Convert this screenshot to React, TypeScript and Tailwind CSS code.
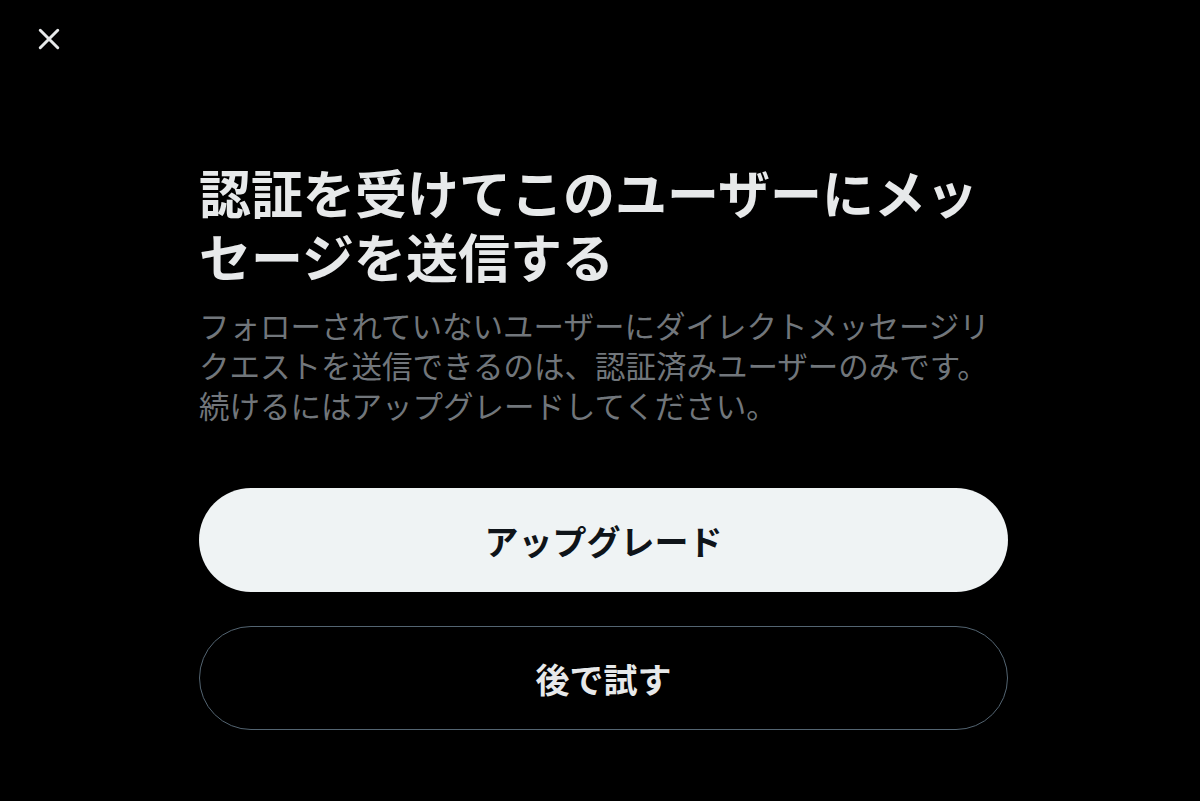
import React from 'react';

const font = { fontFamily: '"Noto Sans CJK JP", "Noto Sans", sans-serif' };

const CloseIcon: React.FC = () => (
  <svg width="30" height="30" viewBox="0 0 24 24" fill="none" stroke="#e7e9ea" strokeWidth="2.4" strokeLinecap="round">
    <path d="M5 5 L19 19 M19 5 L5 19" />
  </svg>
);

const App: React.FC = () => {
  return (
    <div className="w-[1200px] h-[801px] bg-black overflow-hidden" style={font}>
      <div className="pt-[24px] pl-[34px]">
        <button className="w-[30px] h-[30px] flex items-center justify-center">
          <CloseIcon />
        </button>
      </div>
      <div className="ml-[199px] w-[809px] mt-[106px]">
        <h1 className="text-[52px] leading-[64px] font-bold text-[#e7e9ea]">
          認証を受けてこのユーザーにメッセージを送信する
        </h1>
        <p className="mt-[17px] text-[30.5px] leading-[40px] text-[#71767b]">
          フォローされていないユーザーにダイレクトメッセージリクエストを送信できるのは、認証済みユーザーのみです。続けるにはアップグレードしてください。
        </p>
        <div className="mt-[63px] flex flex-col gap-[34px]">
          <button className="h-[104px] w-full rounded-full bg-[#eff3f4] text-[#0f1419] text-[34px] font-bold">
            アップグレード
          </button>
          <button className="h-[104px] w-full rounded-full border border-[#536471] text-[#e7e9ea] text-[34px] font-bold">
            後で試す
          </button>
        </div>
      </div>
    </div>
  );
};

export default App;
